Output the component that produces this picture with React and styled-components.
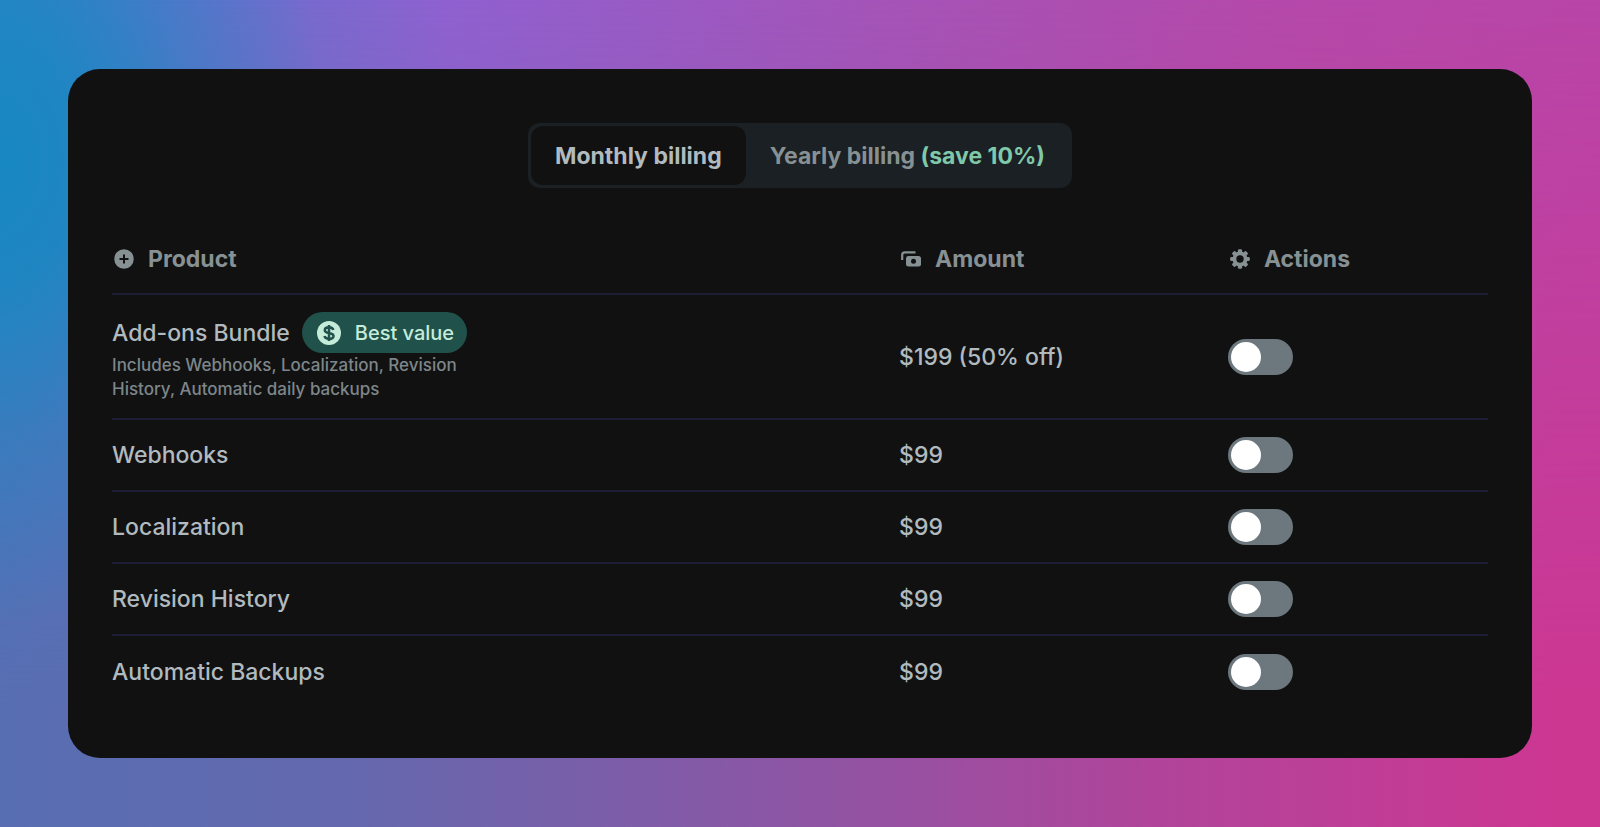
import { useState } from 'react'
import styled, { createGlobalStyle } from 'styled-components'

const GlobalStyle = createGlobalStyle`
  * {
    box-sizing: border-box;
  }
  body {
    margin: 0;
    font-family: Inter, 'Liberation Sans', sans-serif;
    color: #b0babf;
  }
`

const Page = styled.main`
  position: relative;
  isolation: isolate;
  min-height: 100vh;
  padding: 69px 68px;
  background: linear-gradient(90deg, #3a80ca 0%, #6a70cc 14%, #9061d0 28%, #a554b8 55%, #b549aa 80%, #b945a8 100%);

  /* lower half of the backdrop, faded in from the top */
  &::before {
    content: '';
    position: absolute;
    inset: 0;
    z-index: -1;
    background: linear-gradient(90deg, #586eb2 0%, #6468ae 22%, #8758a6 46%, #b0449a 72%, #cc3792 97%);
    mask-image: linear-gradient(180deg, transparent 0%, #000000 85%);
  }

  /* blue glow on the left edge */
  &::after {
    content: '';
    position: absolute;
    inset: 0;
    z-index: -1;
    background: radial-gradient(
      ellipse 330px 460px at 0 20%,
      #1888c2 0%,
      rgba(24, 136, 194, 0.85) 25%,
      rgba(24, 136, 194, 0.35) 60%,
      rgba(24, 136, 194, 0) 100%
    );
  }
`

const Card = styled.section`
  padding: 54px 44px 51px;
  border-radius: 32px;
  background-color: #111111;
`

const Segment = styled.div`
  display: flex;
  width: fit-content;
  margin: 0 auto 40px;
  padding: 3px;
  border-radius: 12px;
  background-color: #1a2023;
`

const SegmentButton = styled.button`
  height: 59px;
  padding: 0 24px;
  border: 0;
  border-radius: 12px;
  background-color: ${({ $active }) => ($active ? '#111111' : 'transparent')};
  color: ${({ $active }) => ($active ? '#b0babf' : '#879194')};
  font-family: inherit;
  font-size: 23px;
  font-weight: 700;
  cursor: pointer;
`

const Saving = styled.span`
  color: #7fc8a9;
`

const Table = styled.table`
  width: 100%;
  table-layout: fixed;
  border-collapse: collapse;
`

const HeadCell = styled.th`
  width: ${({ $width }) => $width};
  height: 66px;
  padding: 0 0 4px;
  border-bottom: 2px solid #1d1d35;
  color: #879194;
  font-size: 23px;
  font-weight: 700;
  text-align: left;
`

const HeadLabel = styled.span`
  display: flex;
  align-items: center;
  gap: 12px;
`

const Row = styled.tr`
  border-bottom: 2px solid #1d1d35;

  &:last-child {
    border-bottom: 0;
  }
`

const Cell = styled.td`
  height: 72px;
  padding: 17px 0;
  font-size: 23px;
  font-weight: 500;
  line-height: 36px;
`

const ProductName = styled.div`
  display: flex;
  align-items: center;
  gap: 12px;
`

const Badge = styled.span`
  display: flex;
  align-items: center;
  gap: 12px;
  height: 41px;
  padding: 0 13px;
  border-radius: 21px;
  background-color: #20514a;
  color: #c4ecd9;
  font-size: 20px;
`

const Description = styled.p`
  max-width: 360px;
  margin: 0;
  color: #7d868a;
  font-size: 17px;
  line-height: 24px;
`

const Switch = styled.input`
  display: flex;
  align-items: center;
  appearance: none;
  width: 65px;
  height: 36px;
  margin: 0;
  padding: 3px;
  border-radius: 18px;
  background-color: #6c787d;
  cursor: pointer;

  &::before {
    content: '';
    width: 30px;
    height: 30px;
    border-radius: 50%;
    background-color: #ffffff;
  }

  &:checked {
    justify-content: flex-end;
    background-color: #2c8c73;
  }
`

const PlusIcon = () => (
  <svg width="24" height="24" viewBox="0 0 24 24" aria-hidden="true">
    <circle cx="12" cy="12" r="9.75" fill="currentColor" />
    <path d="M12 7.5v9M7.5 12h9" stroke="#111111" strokeWidth="2" />
  </svg>
)

const CashIcon = () => (
  <svg width="24" height="24" viewBox="0 0 24 24" aria-hidden="true">
    <path d="M3.2 13V8q0-2.6 2.6-2.6H16.5" fill="none" stroke="currentColor" strokeWidth="2.2" />
    <rect x="7" y="9" width="15" height="10.5" rx="2.5" fill="currentColor" />
    <circle cx="14.5" cy="14.2" r="2.5" fill="#111111" />
  </svg>
)

const GearIcon = () => (
  <svg width="24" height="24" viewBox="0 0 24 24" aria-hidden="true">
    <g fill="currentColor">
      {[0, 45, 90, 135].map((angle) => (
        <rect key={angle} x="9.9" y="2.2" width="4.2" height="19.6" rx="1.3" transform={`rotate(${angle} 12 12)`} />
      ))}
      <circle cx="12" cy="12" r="7.5" />
    </g>
    <circle cx="12" cy="12" r="3.7" fill="#111111" />
  </svg>
)

const CoinIcon = () => (
  <svg width="28" height="28" viewBox="0 0 28 28" aria-hidden="true">
    <circle cx="14" cy="14" r="12" fill="currentColor" />
    <path
      d="M18.3 11c-.5-1.900-2-2.700-4.300-2.700-2.500 0-4.200 1.100-4.200 2.900 0 4.200 8.700 1.600 8.700 5.800 0 1.800-1.900 2.900-4.500 2.900-2.400 0-4.100-.9-4.500-2.800M14 6v16"
      fill="none"
      stroke="#20514a"
      strokeWidth="2.5"
    />
  </svg>
)

const products = [
  {
    name: 'Add-ons Bundle',
    badge: 'Best value',
    description: 'Includes Webhooks, Localization, Revision History, Automatic daily backups',
    amount: '$199 (50% off)',
  },
  { name: 'Webhooks', amount: '$99' },
  { name: 'Localization', amount: '$99' },
  { name: 'Revision History', amount: '$99' },
  { name: 'Automatic Backups', amount: '$99' },
]

function App() {
  const [billing, setBilling] = useState('monthly')

  return (
    <Page>
      <GlobalStyle />
      <Card>
        <Segment role="group" aria-label="Billing period">
          <SegmentButton
            type="button"
            $active={billing === 'monthly'}
            aria-pressed={billing === 'monthly'}
            onClick={() => setBilling('monthly')}
          >
            Monthly billing
          </SegmentButton>
          <SegmentButton
            type="button"
            $active={billing === 'yearly'}
            aria-pressed={billing === 'yearly'}
            onClick={() => setBilling('yearly')}
          >
            Yearly billing <Saving>(save 10%)</Saving>
          </SegmentButton>
        </Segment>
        <Table>
          <thead>
            <tr>
              <HeadCell scope="col" $width="57.2%">
                <HeadLabel>
                  <PlusIcon />
                  Product
                </HeadLabel>
              </HeadCell>
              <HeadCell scope="col" $width="23.9%">
                <HeadLabel>
                  <CashIcon />
                  Amount
                </HeadLabel>
              </HeadCell>
              <HeadCell scope="col" $width="18.9%">
                <HeadLabel>
                  <GearIcon />
                  Actions
                </HeadLabel>
              </HeadCell>
            </tr>
          </thead>
          <tbody>
            {products.map((product) => (
              <Row key={product.name}>
                <Cell>
                  <ProductName>
                    {product.name}
                    {product.badge && (
                      <Badge>
                        <CoinIcon />
                        {product.badge}
                      </Badge>
                    )}
                  </ProductName>
                  {product.description && <Description>{product.description}</Description>}
                </Cell>
                <Cell>{product.amount}</Cell>
                <Cell>
                  <Switch type="checkbox" role="switch" aria-label={product.name} />
                </Cell>
              </Row>
            ))}
          </tbody>
        </Table>
      </Card>
    </Page>
  )
}

export default App
